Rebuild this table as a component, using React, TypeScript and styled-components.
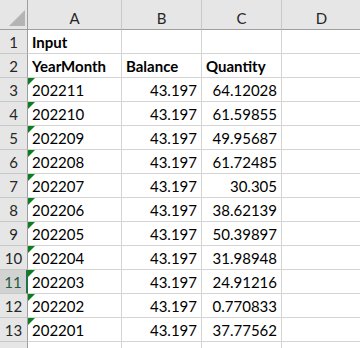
import React from "react";
import styled, { createGlobalStyle, css } from "styled-components";

const GlobalStyle = createGlobalStyle`
  html, body {
    margin: 0;
    padding: 0;
    background: #ffffff;
    overflow: hidden;
  }
`;

const HEADER_BG = "#e6e6e6";
const HEADER_LINE = "#c8c8c8";
const HEADER_EDGE = "#9e9e9e";
const GRID_LINE = "#d4d4d4";
const EXCEL_GREEN = "#217346";

const Sheet = styled.div`
  display: grid;
  grid-template-columns: 28px 94px 80px 80px 80px;
  grid-template-rows: 30px repeat(14, 24px);
  width: 360px;
  height: 348px;
  overflow: hidden;
  font-family: Lato, "Liberation Sans", sans-serif;
  font-size: 15px;
  color: #000;
`;

const baseCell = css`
  box-sizing: border-box;
  display: flex;
  align-items: flex-end;
  padding-bottom: 2px;
  line-height: 17px;
  white-space: nowrap;
  overflow: hidden;
`;

const Corner = styled.div`
  ${baseCell};
  position: relative;
  background: ${HEADER_BG};
  border-right: 1px solid ${HEADER_EDGE};
  border-bottom: 1px solid ${HEADER_EDGE};
`;

const CornerTriangle = styled.div`
  position: absolute;
  right: 2px;
  bottom: 3px;
  width: 0;
  height: 0;
  border-left: 16px solid transparent;
  border-bottom: 16px solid #b4b4b4;
`;

const ColHeader = styled.div`
  ${baseCell};
  justify-content: center;
  background: ${HEADER_BG};
  color: #262626;
  border-right: 1px solid ${HEADER_LINE};
  border-bottom: 1px solid ${HEADER_EDGE};
`;

const RowHeader = styled.div<{ $active?: boolean }>`
  ${baseCell};
  justify-content: center;
  background: ${(p) => (p.$active ? "#d2d2d2" : HEADER_BG)};
  color: ${(p) => (p.$active ? "#1d5c38" : "#262626")};
  border-bottom: 1px solid ${HEADER_LINE};
  border-right: ${(p) =>
    p.$active ? `2px solid ${EXCEL_GREEN}` : `1px solid ${HEADER_EDGE}`};
`;

const Cell = styled.div<{ $align?: "left" | "right"; $bold?: boolean; $textNumber?: boolean }>`
  ${baseCell};
  position: relative;
  justify-content: ${(p) => (p.$align === "right" ? "flex-end" : "flex-start")};
  padding-left: 4px;
  padding-right: 4px;
  font-weight: ${(p) => (p.$bold ? 700 : 400)};
  border-right: 1px solid ${GRID_LINE};
  border-bottom: 1px solid ${GRID_LINE};

  ${(p) =>
    p.$textNumber &&
    css`
      &::before {
        content: "";
        position: absolute;
        left: 0;
        top: 0;
        width: 0;
        height: 0;
        border-top: 7px solid #0e7d1e;
        border-right: 7px solid transparent;
      }
    `}
`;

type Row = [string, string, string];

const rows: Row[] = [
  ["202211", "43.197", "64.12028"],
  ["202210", "43.197", "61.59855"],
  ["202209", "43.197", "49.95687"],
  ["202208", "43.197", "61.72485"],
  ["202207", "43.197", "30.305"],
  ["202206", "43.197", "38.62139"],
  ["202205", "43.197", "50.39897"],
  ["202204", "43.197", "31.98948"],
  ["202203", "43.197", "24.91216"],
  ["202202", "43.197", "0.770833"],
  ["202201", "43.197", "37.77562"],
];

const columns = ["A", "B", "C", "D"];

export default function App() {
  return (
    <>
      <GlobalStyle />
      <Sheet>
        <Corner>
          <CornerTriangle />
        </Corner>
        {columns.map((c) => (
          <ColHeader key={c}>{c}</ColHeader>
        ))}

        <RowHeader>1</RowHeader>
        <Cell $bold>Input</Cell>
        <Cell />
        <Cell />
        <Cell />

        <RowHeader>2</RowHeader>
        <Cell $bold>YearMonth</Cell>
        <Cell $bold>Balance</Cell>
        <Cell $bold>Quantity</Cell>
        <Cell />

        {rows.map(([ym, bal, qty], i) => {
          const n = i + 3;
          return (
            <React.Fragment key={ym}>
              <RowHeader $active={n === 11}>{n}</RowHeader>
              <Cell $textNumber>{ym}</Cell>
              <Cell $align="right">{bal}</Cell>
              <Cell $align="right">{qty}</Cell>
              <Cell />
            </React.Fragment>
          );
        })}

        {/* row 14 is only partly in view; its label sits below the fold */}
        <RowHeader />
        <Cell />
        <Cell />
        <Cell />
        <Cell />
      </Sheet>
    </>
  );
}
